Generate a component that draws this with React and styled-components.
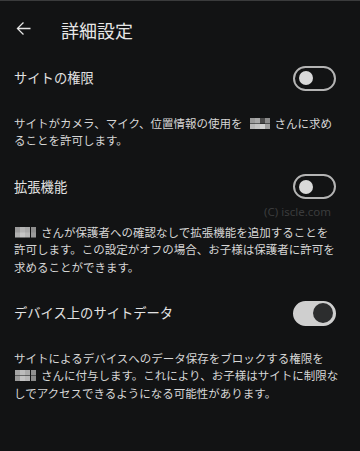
import React from "react";
import styled, { createGlobalStyle } from "styled-components";

const Global = createGlobalStyle`
  html, body { margin: 0; padding: 0; background: #121314; }
  body {
    font-family: "Noto Sans CJK JP", "Noto Sans", sans-serif;
    color: #e2e2e2;
    -webkit-font-smoothing: antialiased;
  }
`;

const Page = styled.div`
  width: 360px;
  height: 451px;
  background: #121314;
  overflow: hidden;
`;

const TopLine = styled.div`
  height: 1px;
  background: #3a3b3c;
`;

const Header = styled.header`
  height: 57px;
  display: flex;
  align-items: center;
  padding-left: 13px;
  gap: 27px;
`;

const BackIcon = styled.svg`
  width: 21px;
  height: 21px;
  margin-bottom: 3px;
  fill: #e6e6e6;
  flex: none;
`;

const Title = styled.h1`
  margin: 0;
  font-size: 18px;
  font-weight: 400;
  color: #e6e6e6;
  line-height: 1;
`;

const Section = styled.section`
  position: relative;
  padding-bottom: 17px;
`;

const Row = styled.div`
  height: 40px;
  display: flex;
  align-items: center;
  justify-content: space-between;
  padding: 0 24px 0 14px;
`;

const Label = styled.span`
  font-size: 13.3px;
  color: #e2e2e2;
  line-height: 1;
`;

const Switch = styled.div`
  box-sizing: border-box;
  width: 43px;
  height: 25px;
  border-radius: 13px;
  border: 2px solid ${(p) => (p.$on ? "#cfcfcf" : "#b4b4b4")};
  background: ${(p) => (p.$on ? "#cfcfcf" : "transparent")};
  display: flex;
  align-items: center;
  justify-content: ${(p) => (p.$on ? "flex-end" : "flex-start")};
  padding: ${(p) => (p.$on ? "0 1px" : "0 4px")};
`;

const Thumb = styled.div`
  width: ${(p) => (p.$on ? 20 : 14)}px;
  height: ${(p) => (p.$on ? 20 : 14)}px;
  border-radius: 50%;
  background: ${(p) => (p.$on ? "#2c2d2e" : "#d9d9d9")};
`;

const Desc = styled.p`
  margin: 17px 0 0;
  padding: 0 8px 0 14px;
  font-size: 11.5px;
  line-height: 17.4px;
  color: #d6d6d6;
  white-space: nowrap;
`;

const cellBg = (colors) =>
  colors
    .map((c, i) => {
      const x = (i % 4) * 33.333;
      const y = Math.floor(i / 4) * 100;
      return `linear-gradient(${c}, ${c}) ${x}% ${y}% / 25% 50% no-repeat`;
    })
    .join(", ");

const Mosaic = styled.span`
  display: inline-block;
  width: 21px;
  height: 11px;
  vertical-align: -1px;
  margin: ${(p) => p.$margin};
  background: ${(p) => cellBg(p.$colors)};
`;

const Watermark = styled.span`
  position: absolute;
  top: 37px;
  right: 29px;
  font-family: "Noto Sans", sans-serif;
  font-size: 11.5px;
  color: #3b3c3d;
  line-height: 16px;
`;

const m1 = ["#9a9a9a", "#a8a8a8", "#4a4a4a", "#8c8c8c", "#b8b8b8", "#c4c4c4", "#d2d2d2", "#a0a0a0"];
const m2 = ["#9c9c9c", "#b4b4b4", "#a9a9a9", "#8e8e8e", "#b0b0b0", "#c6c6c6", "#b8b8b8", "#9a9a9a"];
const m3 = ["#a4a4a4", "#bcbcbc", "#aaaaaa", "#909090", "#9a9a9a", "#c2c2c2", "#b6b6b6", "#8a8a8a"];

const Toggle = ({ on }) => (
  <Switch $on={on}>
    <Thumb $on={on} />
  </Switch>
);

export default function App() {
  return (
    <Page>
      <Global />
      <TopLine />
      <Header>
        <BackIcon viewBox="0 0 24 24">
          <path d="M20 11.25H6.9l5.6-5.6L11.45 4.6 4.05 12l7.4 7.4 1.05-1.05-5.6-5.6H20z" />
        </BackIcon>
        <Title>詳細設定</Title>
      </Header>

      <Section>
        <Row>
          <Label>サイトの権限</Label>
          <Toggle on={false} />
        </Row>
        <Desc>
          サイトがカメラ、マイク、位置情報の使用を
          <Mosaic $colors={m1} $margin="0 4px 0 7px" />
          さんに求め
          <br />
          ることを許可します。
        </Desc>
      </Section>

      <Section>
        <Row>
          <Label>拡張機能</Label>
          <Toggle on={false} />
        </Row>
        <Watermark>(C) iscle.com</Watermark>
        <Desc>
          <Mosaic $colors={m2} $margin="0 5px 0 1px" />
          さんが保護者への確認なしで拡張機能を追加することを
          <br />
          許可します。この設定がオフの場合、お子様は保護者に許可を
          <br />
          求めることができます。
        </Desc>
      </Section>

      <Section>
        <Row>
          <Label>デバイス上のサイトデータ</Label>
          <Toggle on={true} />
        </Row>
        <Desc>
          サイトによるデバイスへのデータ保存をブロックする権限を
          <br />
          <Mosaic $colors={m3} $margin="0 5px 0 1px" />
          さんに付与します。これにより、お子様はサイトに制限な
          <br />
          しでアクセスできるようになる可能性があります。
        </Desc>
      </Section>
    </Page>
  );
}
